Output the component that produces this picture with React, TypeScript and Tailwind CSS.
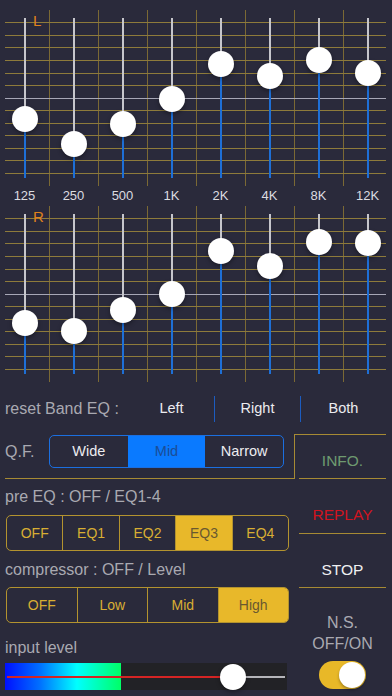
import React from "react";

const bands = ["125", "250", "500", "1K", "2K", "4K", "8K", "12K"];
const leftValues = [101, 126, 106, 81, 46, 58, 42, 55];
const rightValues = [109, 117, 96, 80, 37, 52, 28, 29];

const gridRows = Array.from({ length: 13 }, (_, i) => Math.round(12.3 + i * 12.55) + 0.5);
const gridCols = [1, 2, 3, 4, 5, 6, 7].map((k) => k * 49 + 0.5);

const Panel = ({ label, values }: { label: string; values: number[] }) => (
  <div className="relative h-[176px]">
    <svg className="absolute inset-0" width="392" height="176">
      {gridCols.map((x) => (
        <line key={x} x1={x} x2={x} y1={0} y2={176} stroke="#7b6934" strokeWidth={1} />
      ))}
      {gridRows.map((y, i) => (
        <line
          key={y}
          x1={5}
          x2={386}
          y1={y}
          y2={y}
          stroke={i === 6 ? "#a7a7b6" : "#8e7b3b"}
          strokeWidth={1}
        />
      ))}
    </svg>
    <span className="absolute left-[33px] top-[3px] text-[15px] leading-none text-[#e0821c]">
      {label}
    </span>
    <div className="relative flex h-full">
      {values.map((v, i) => (
        <div key={i} className="flex w-[49px] justify-center pt-[8px]">
          <div className="relative h-[160px] w-[2px] bg-[#c6c6cc]">
            <div
              className="absolute bottom-0 left-0 w-full bg-[#1e6fd6]"
              style={{ height: 160 - v }}
            />
            <div
              className="absolute left-1/2 h-[26px] w-[26px] -translate-x-1/2 -translate-y-1/2 rounded-full bg-white shadow-[0_2px_4px_rgba(0,0,0,0.35)]"
              style={{ top: v }}
            />
          </div>
        </div>
      ))}
    </div>
  </div>
);

const GoldSegments = ({ items, selected }: { items: string[]; selected: number }) => (
  <div className="ml-[1px] flex h-[36px] w-[283px] overflow-hidden rounded-[5px] border border-[#b3932f]">
    {items.map((item, i) => (
      <div
        key={item}
        className={`flex flex-1 items-center justify-center text-[14px] ${
          i > 0 ? "border-l border-[#b3932f]" : ""
        } ${i === selected ? "bg-[#e8b82a] text-[#6a5830]" : "text-[#d8ae33]"}`}
      >
        {item}
      </div>
    ))}
  </div>
);

export default function App() {
  return (
    <div className="h-[696px] w-[392px] overflow-hidden bg-[#2a2a3b] pt-[10px] font-['Liberation_Sans',Arial,sans-serif]">
      <Panel label="L" values={leftValues} />
      <div className="flex h-[20px]">
        {bands.map((b) => (
          <div key={b} className="w-[49px] text-center text-[13px] leading-[20px] text-[#dcdce0]">
            {b}
          </div>
        ))}
      </div>
      <Panel label="R" values={rightValues} />

      {/* reset row */}
      <div className="mt-[14px] flex h-[26px] items-center">
        <div className="w-[129px] pl-[5px] text-[16px] text-[#a9a9b1]">reset Band EQ :</div>
        <div className="flex h-full items-center justify-center w-[85px] text-[14.5px] text-[#ececf0]">Left</div>
        <div className="flex h-full w-[86px] items-center justify-center border-l border-[#1c5cc0] text-[14.5px] text-[#ececf0]">
          Right
        </div>
        <div className="flex h-full w-[86px] items-center justify-center border-l border-[#1c5cc0] text-[14.5px] text-[#ececf0]">
          Both
        </div>
      </div>

      <div className="flex">
        {/* left column */}
        <div className="w-[294px] pl-[5px]">
          <div className="flex h-[57px] items-start border-b border-[#a68a34] pt-[13px]">
            <div className="w-[44px] text-[16px] leading-[33px] text-[#a9a9b1]">Q.F.</div>
            <div className="flex h-[33px] w-[235px] overflow-hidden rounded-[5px] border border-[#1b6fe0] text-[14.5px]">
              <div className="flex flex-1 items-center justify-center text-[#ececf0]">Wide</div>
              <div className="flex flex-1 items-center justify-center bg-[#0a7aff] text-[#1b4d96]">Mid</div>
              <div className="flex flex-1 items-center justify-center text-[#ececf0]">Narrow</div>
            </div>
          </div>
          <div className="mt-[8px] text-[16px] leading-[20px] text-[#a9a9b1]">pre EQ : OFF / EQ1-4</div>
          <div className="mt-[8px]">
            <GoldSegments items={["OFF", "EQ1", "EQ2", "EQ3", "EQ4"]} selected={3} />
          </div>
          <div className="mt-[9px] text-[16px] leading-[20px] text-[#a9a9b1]">compressor : OFF / Level</div>
          <div className="mt-[7px]">
            <GoldSegments items={["OFF", "Low", "Mid", "High"]} selected={3} />
          </div>
          <div className="mt-[15px] text-[16px] leading-[20px] text-[#a9a9b1]">input level</div>
          <div className="relative mt-[5px] flex h-[27px] w-[282px] bg-[#222226]">
            <div className="h-full w-[116px] bg-[linear-gradient(to_right,#0010ff,#0070ff_30%,#00ffff_62%,#00ff66)]" />
            <div className="absolute left-[2px] top-1/2 h-[2px] w-[226px] -translate-y-1/2 bg-[#d42424]" />
            <div className="absolute left-[228px] right-[2px] top-1/2 h-[2px] -translate-y-1/2 bg-[#b5b5ba]" />
            <div className="absolute left-[228px] top-1/2 h-[26px] w-[26px] -translate-x-1/2 -translate-y-1/2 rounded-full bg-white shadow-[0_2px_4px_rgba(0,0,0,0.35)]" />
          </div>
        </div>

        {/* right column */}
        <div className="w-[98px] pr-[6px] pt-[12px]">
          <div className="border-l border-t border-[#a68a34] pl-[4px]">
            <div className="h-[44px] border-b border-[#a68a34] pt-[16px] text-center text-[15.5px] leading-[20px] text-[#6e9a70]">
              INFO.
            </div>
          </div>
          <div className="ml-[5px] h-[55px] border-b border-[#a68a34] pt-[26px] text-center text-[15.5px] leading-[20px] text-[#d1141f]">
            REPLAY
          </div>
          <div className="ml-[5px] h-[54px] border-b border-[#a68a34] pt-[26px] text-center text-[15.5px] leading-[20px] text-[#f0f0f2]">
            STOP
          </div>
          <div className="ml-[5px] pt-[24px] text-center text-[16px] leading-[21px] text-[#a9a9b1]">
            <div>N.S.</div>
            <div>OFF/ON</div>
          </div>
          <div className="ml-[5px] mt-[7px] flex justify-center">
            <div className="flex h-[28px] w-[47px] items-center justify-end rounded-full bg-[#e8b828] pr-[1px]">
              <div className="h-[26px] w-[26px] rounded-full bg-white shadow-[0_2px_3px_rgba(0,0,0,0.3)]" />
            </div>
          </div>
        </div>
      </div>
    </div>
  );
}
